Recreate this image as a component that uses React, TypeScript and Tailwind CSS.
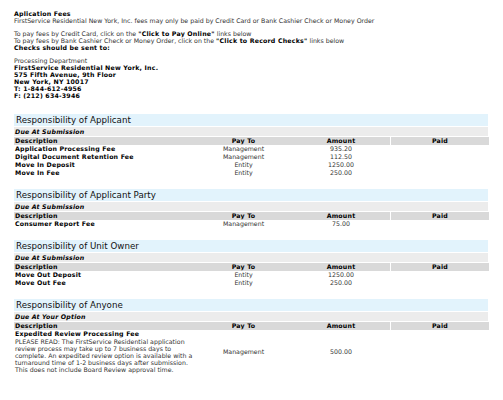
import React from 'react';

type Row = { desc: string; note?: string; payTo: string; amount: string };

type Section = { title: string; due: string; rows: Row[] };

const sections: Section[] = [
  {
    title: 'Responsibility of Applicant',
    due: 'Due At Submission',
    rows: [
      { desc: 'Application Processing Fee', payTo: 'Management', amount: '935.20' },
      { desc: 'Digital Document Retention Fee', payTo: 'Management', amount: '112.50' },
      { desc: 'Move In Deposit', payTo: 'Entity', amount: '1250.00' },
      { desc: 'Move In Fee', payTo: 'Entity', amount: '250.00' },
    ],
  },
  {
    title: 'Responsibility of Applicant Party',
    due: 'Due At Submission',
    rows: [{ desc: 'Consumer Report Fee', payTo: 'Management', amount: '75.00' }],
  },
  {
    title: 'Responsibility of Unit Owner',
    due: 'Due At Submission',
    rows: [
      { desc: 'Move Out Deposit', payTo: 'Entity', amount: '1250.00' },
      { desc: 'Move Out Fee', payTo: 'Entity', amount: '250.00' },
    ],
  },
  {
    title: 'Responsibility of Anyone',
    due: 'Due At Your Option',
    rows: [
      {
        desc: 'Expedited Review Processing Fee',
        note:
          'PLEASE READ: The FirstService Residential application review process may take up to 7 business days to complete. An expedited review option is available with a turnaround time of 1-2 business days after submission. This does not include Board Review approval time.',
        payTo: 'Management',
        amount: '500.00',
      },
    ],
  },
];

const cols = 'grid grid-cols-[181px_97px_98px_99px]';
const bold = 'font-bold tracking-[0.2px] text-black';

const FeeSection: React.FC<{ section: Section; first?: boolean }> = ({ section, first }) => (
  <div className={first ? 'mt-[15px]' : 'mt-[12px]'}>
    <div className="h-[12px] bg-[#e2f3fc] pl-[2px] text-[8.7px] leading-[12px] text-[#111]">
      {section.title}
    </div>
    <div className={`${bold} mt-[1px] h-[9px] bg-[#ececec] pl-[1px] italic leading-[9px]`}>{section.due}</div>
    <div className={`${cols} ${bold} mt-[1px] h-[8px] leading-[8px] text-[#222]`}>
      <div className="bg-[#d9d9d9] pl-[1px]">Description</div>
      <div className="bg-[#d9d9d9] text-center">Pay To</div>
      <div className="bg-[#d9d9d9] text-center">Amount</div>
      <div className="ml-[1px] bg-[#d9d9d9] text-center">Paid</div>
    </div>
    {section.rows.map((row) => (
      <div key={row.desc} className={`${cols} items-center leading-[8px]`}>
        <div className="pl-[1px]">
          <div className={bold}>{row.desc}</div>
          {row.note && <div className="pr-[2px] leading-[7px] text-[#333]">{row.note}</div>}
        </div>
        <div className="text-center text-[#333]">{row.payTo}</div>
        <div className="text-center text-[#333]">{row.amount}</div>
        <div />
      </div>
    ))}
  </div>
);

export default function App() {
  return (
    <div
      className="w-[503px] h-[400px] overflow-hidden bg-white pl-[14px] pr-[15px] pt-[10px] text-[6.25px] leading-[7px] text-[#333]"
      style={{ fontFamily: '"DejaVu Sans", Verdana, sans-serif' }}
    >
      <div className={bold}>Aplication Fees</div>
      <div>
        FirstService Residential New York, Inc. fees may only be paid by Credit Card or Bank Cashier Check or Money Order
      </div>
      <div className="mt-[6px]">
        To pay fees by Credit Card, click on the <b className={bold}>"Click to Pay Online"</b> links below
      </div>
      <div>
        To pay fees by Bank Cashier Check or Money Order, click on the{' '}
        <b className={bold}>"Click to Record Checks"</b> links below
      </div>
      <div className={bold}>Checks should be sent to:</div>
      <div className="mt-[6px]">Processing Department</div>
      <div className={bold}>
        <div>FirstService Residential New York, Inc.</div>
        <div>575 Fifth Avenue, 9th Floor</div>
        <div>New York, NY 10017</div>
        <div>T: 1-844-612-4956</div>
        <div>F: (212) 634-3946</div>
      </div>
      {sections.map((s, i) => (
        <FeeSection key={s.title} section={s} first={i === 0} />
      ))}
    </div>
  );
}
